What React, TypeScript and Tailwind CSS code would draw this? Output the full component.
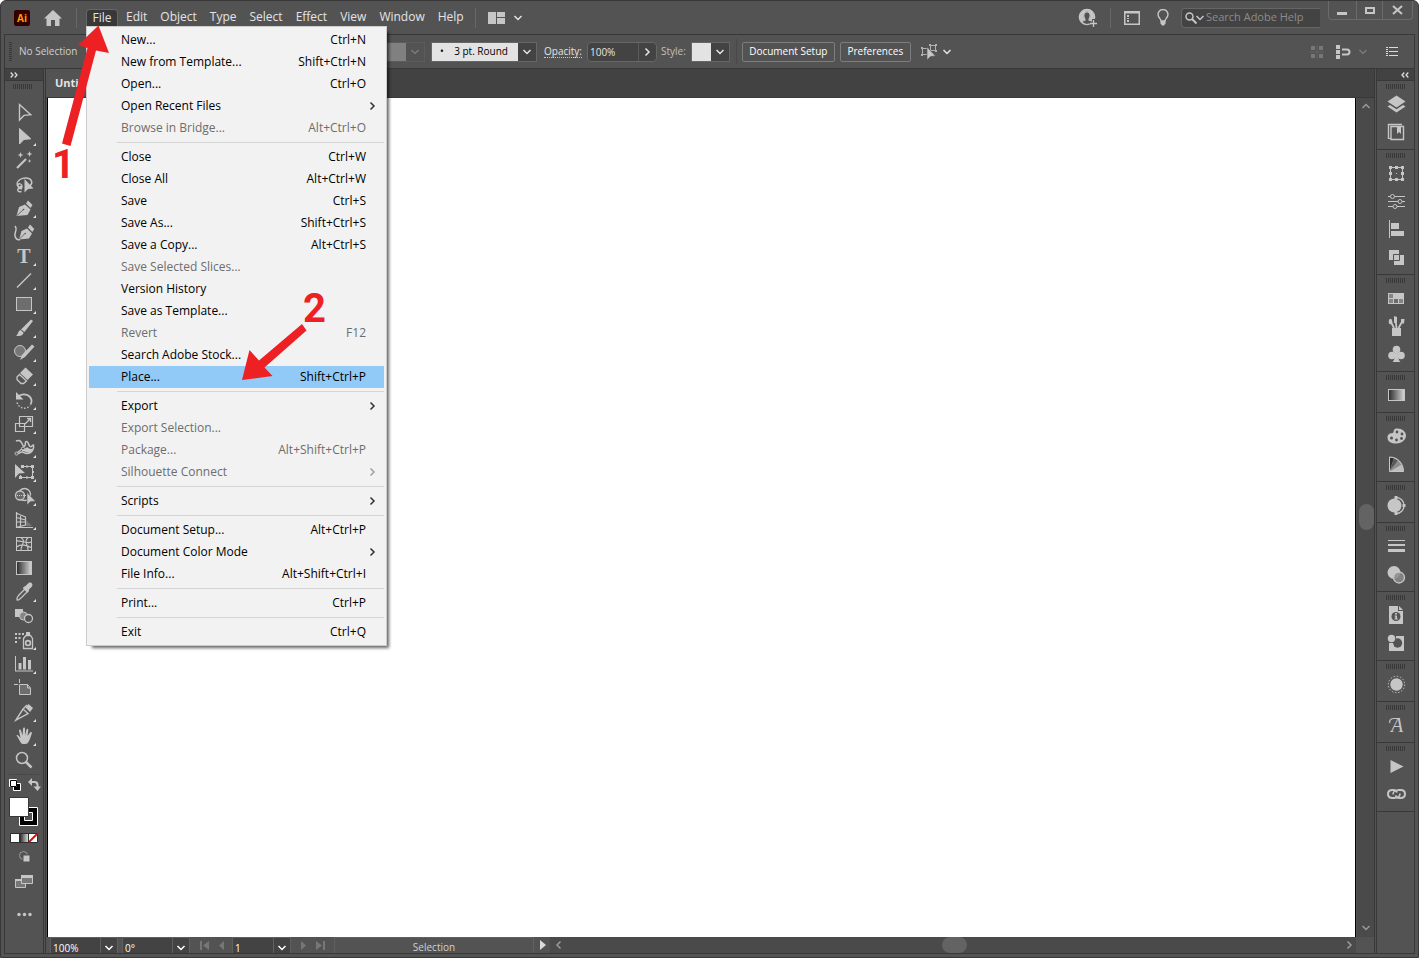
import React from 'react';
import clsx from 'clsx';

type Tool = { name: string; more?: boolean; icon: React.ReactNode };

const LIGHT = '#c6c6c6';

const ARROW = 'M7.5 4.5v15.5l4.5-4.6 6.8-.6z';

const tools: Tool[] = [
  { name: 'Selection', icon: <path d={ARROW} fill="none" stroke={LIGHT} strokeWidth="1.4" /> },
  { name: 'Direct Selection', more: true, icon: <path d={ARROW} stroke={LIGHT} /> },
  {
    name: 'Magic Wand',
    icon: (
      <>
        <path d="M5 20L14 11" stroke={LIGHT} strokeWidth="2.2" />
        <path d="M8.500 4l.8 2.200 2.200.8-2.200.8-.8 2.200-.8-2.200-2.200-.8 2.200-.8zM17.500 3l.8 2.200 2.200.8-2.200.8-.8 2.200-.8-2.200-2.200-.8 2.200-.8zM17.500 11l.5 1.500 1.500.5-1.500.5-.5 1.500-.5-1.500-1.500-.5 1.500-.5z" />
      </>
    ),
  },
  {
    name: 'Lasso',
    icon: (
      <>
        <path d="M10 17c-5-1-7-6-2-9.500 4-2.500 10-2 11.500 1.500.8 2-.5 4-1.500 5M9.500 19.500c-3 1-4.500-1-3.500-2.500s4 .5 4-2.500-3.500-3.500-4-1.500 2.500 2.500 3.500 1" fill="none" stroke={LIGHT} strokeWidth="1.400" />
        <path d="M12.500 7v13.500l3.600-3.600 5.400-.4z" />
      </>
    ),
  },
  {
    name: 'Pen',
    more: true,
    icon: (
      <>
        <path d="M4.500 20l2.500-9 6-2.500 5.500 5-3 5.500z" />
        <path d="M14 7.500l2-3 4.500 4.500-2 3z" />
        <path d="M5 19.500l6-5.500" stroke="#535353" strokeWidth=".8" />
        <circle cx="11.500" cy="13.500" r=".8" fill="#535353" />
      </>
    ),
  },
  {
    name: 'Curvature',
    icon: (
      <>
        <path d="M3 6c3 3-1 7 0 10 .8 3 3 4 5 3.500" fill="none" stroke={LIGHT} strokeWidth="1.500" />
        <path d="M7 19.500l2.500-8.500 5.500-2.500 5 5-3 5z" />
        <path d="M16 7.500l2-3 4.300 4.500-2 3z" />
        <path d="M7.500 19l5-5" stroke="#535353" strokeWidth=".8" />
        <circle cx="13.200" cy="13.500" r=".8" fill="#535353" />
      </>
    ),
  },
  {
    name: 'Type',
    more: true,
    icon: (
      <text x="12" y="19" textAnchor="middle" fontSize="20" fontWeight="700" className="font-['Liberation_Serif',serif]">
        T
      </text>
    ),
  },
  { name: 'Line Segment', more: true, icon: <path d="M5 19.500L19 5.500" stroke={LIGHT} strokeWidth="1.500" /> },
  { name: 'Rectangle', more: true, icon: <rect x="4.500" y="5.500" width="15" height="13" fill="#6e6e6e" stroke={LIGHT} /> },
  {
    name: 'Paintbrush',
    more: true,
    icon: (
      <>
        <path d="M19 3.500l2 1.500-8.500 11-3.500-2.500z" />
        <path d="M8.500 14l3 2.500c0 3-4 4.500-7.500 3 2.500-.8 1.500-4.500 4.500-5.500z" />
      </>
    ),
  },
  {
    name: 'Shaper',
    more: true,
    icon: (
      <>
        <circle cx="8" cy="11" r="5.500" fill="#777" stroke={LIGHT} />
        <path d="M22.500 6.500L13 17l-5 3 2-5 10-10.500z" />
      </>
    ),
  },
  {
    name: 'Eraser',
    more: true,
    icon: (
      <>
        <path d="M13.500 3.500l7.500 7-5.500 5.500-7.500-7z" />
        <path d="M7.500 10.500l7 6.500-3 2.500H9L5 15.500v-2.500z" fill="none" stroke={LIGHT} strokeWidth="1.300" />
      </>
    ),
  },
  {
    name: 'Rotate',
    more: true,
    icon: (
      <>
        <path d="M6 9c4-4.500 12-3 13.500 3 .3 1.500 0 3-1 4.500" fill="none" stroke={LIGHT} strokeWidth="1.800" />
        <path d="M4 4v7.500h7.500z" />
        <path d="M5 14.500c2 6.500 9.500 7.500 13 3" fill="none" stroke={LIGHT} strokeWidth="1.400" strokeDasharray="1.500 1.700" />
      </>
    ),
  },
  {
    name: 'Scale',
    more: true,
    icon: (
      <>
        <path d="M3.500 11.500h9v8h-9zM7.500 14.500v-10h13v10z" fill="none" stroke={LIGHT} strokeWidth="1.200" />
        <path d="M13 12l5-5M15 6.500h3.500V10" fill="none" stroke={LIGHT} strokeWidth="1.300" />
      </>
    ),
  },
  {
    name: 'Width',
    more: true,
    icon: (
      <>
        <path d="M4 5c3-1.500 5 0 6 2.500s2 3.500 3 2-.5-4 1.500-4 2 4 3.500 5 2-1.500 3.500-1.500c1 4-2 8.500-6.500 8.500-3 0-3-1.500-5-1.500s-2.500 1.500-4 1.500" fill="none" stroke={LIGHT} strokeWidth="1.500" />
        <path d="M10 12c1.500 1 4 1 5-1 2 2 4 2.500 6 1.500-1 3-3 4.500-6 4-2-.5-3-1.500-5-1z" />
        <path d="M5 17l6-5" stroke={LIGHT} strokeWidth="1.200" />
        <circle cx="4.500" cy="17.500" r="1.500" fill="#535353" stroke={LIGHT} />
        <circle cx="11" cy="12.500" r="1.500" fill="#535353" stroke={LIGHT} />
      </>
    ),
  },
  {
    name: 'Free Transform',
    more: true,
    icon: (
      <>
        <path d="M3 4v14l4-4.500 6-.5z" />
        <path d="M10 6.500h10.500v11H8.500V15" fill="none" stroke={LIGHT} />
        <path d="M9 5h3v3H9zM19 5h3v3h-3zM19 16h3v3h-3zM7 16h3v3H7zM14 16.500h2v2h-2zM20 11h2v2h-2zM14 5.500h2v2h-2z" />
      </>
    ),
  },
  {
    name: 'Shape Builder',
    more: true,
    icon: (
      <>
        <circle cx="12.500" cy="10.500" r="6" fill="none" stroke={LIGHT} strokeWidth="1.300" />
        <circle cx="8" cy="11.500" r="4.500" fill="#666" stroke={LIGHT} strokeWidth="1.300" />
        <path d="M5 11.500h11" stroke={LIGHT} strokeDasharray="1 1" />
        <path d="M15 8.500v12.500l3.300-3.300 5.200-.4z" stroke="#535353" strokeWidth=".6" />
      </>
    ),
  },
  {
    name: 'Perspective Grid',
    more: true,
    icon: (
      <>
        <path d="M4.500 4v15.500M4 5l9.500 4M4.500 9.500l9 2.500M4.500 14h9M8.500 6.500v11.500M13.500 8.500V17L4 19.500h17" fill="none" stroke={LIGHT} strokeWidth="1.200" />
        <path d="M14 12l6 6h-6z" fill="#777" />
      </>
    ),
  },
  {
    name: 'Mesh',
    icon: (
      <>
        <rect x="4.500" y="5.500" width="15" height="13" fill="none" stroke={LIGHT} />
        <path d="M4.500 9c5-.5 10 3 15 1M4.500 15c6-4.500 10-1 15 .5M9 5.500c6 3.500-1 9 0 13M16 5.500c-5 5 1 8 0 13" fill="none" stroke={LIGHT} strokeWidth="1.200" />
      </>
    ),
  },
  { name: 'Gradient', icon: <rect x="4.500" y="5.500" width="15" height="13" fill="url(#fade)" stroke={LIGHT} /> },
  {
    name: 'Eyedropper',
    more: true,
    icon: (
      <>
        <path d="M5 20c-.8-2 .5-3 2-5l6-6 2.500 2.500-6 6c-2 1.500-3 3-4.500 2.500z" fill="none" stroke={LIGHT} strokeWidth="1.300" />
        <path d="M11.500 7l2-1 3-3c2.500-1.500 5 .8 3.500 3.500l-3 3-.5 2.500-1.500.5L11 8.500z" />
      </>
    ),
  },
  {
    name: 'Blend',
    icon: (
      <>
        <path d="M3 5h8v8H3z" />
        <circle cx="11.500" cy="12" r="4" fill="#868686" stroke={LIGHT} />
        <circle cx="16.500" cy="14.500" r="4" fill="#535353" stroke={LIGHT} strokeWidth="1.300" />
      </>
    ),
  },
  {
    name: 'Symbol Sprayer',
    more: true,
    icon: (
      <>
        <path d="M3 5h2v2H3zM6.500 5h2v2h-2zM10 5h2v2h-2zM3 9h2v2H3zM6.500 9h2v2h-2zM3 13h2v2H3zM14 4h4v3h-4z" />
        <path d="M11.500 10.500l2.500-3h4.500l2 3v10h-9z" fill="#535353" stroke={LIGHT} strokeWidth="1.300" />
        <circle cx="16" cy="15" r="2.400" fill="none" stroke={LIGHT} strokeWidth="1.600" />
      </>
    ),
  },
  {
    name: 'Column Graph',
    more: true,
    icon: <path d="M3 4h1v14.500h17v1H3zM6.500 11h3v6.500h-3zM11 5h3v12.500h-3zM16 8h3v9.500h-3z" />,
  },
  {
    name: 'Artboard',
    icon: (
      <>
        <path d="M7.500 8.500h8l3 3.500v6.500h-11z" fill="#6e6e6e" stroke={LIGHT} />
        <path d="M7.500 3v4M2 8.500h4M15.500 8.500V12h3" fill="none" stroke={LIGHT} />
      </>
    ),
  },
  {
    name: 'Slice',
    more: true,
    icon: (
      <>
        <path d="M4 20L11 9l5 4.500zM11 9l4-4" fill="none" stroke={LIGHT} strokeWidth="1.400" />
        <path d="M13.500 7.500L16.500 4l4.500 4-3 4z" />
      </>
    ),
  },
  {
    name: 'Hand',
    more: true,
    icon: (
      <path d="M4.500 11.500c1-1 2 0 4 2.500L7 6.500c0-1.500 1.600-1.500 2 0l1.500 5L11 4.500c.2-1.500 2-1.500 2 0v7l1.500-6c.4-1.400 2-1 1.800.4L15.500 12l2.500-3.500c1-1.200 2.400-.4 1.800 1-1 2.500-2 7-4 9.500-.8 1-4.500 1.500-6.300.5C8 18 6.500 14 4.500 11.500z" />
    ),
  },
  {
    name: 'Zoom',
    icon: (
      <>
        <circle cx="10" cy="10" r="5.500" fill="none" stroke={LIGHT} strokeWidth="1.500" />
        <path d="M14 14l5.500 5.500" stroke={LIGHT} strokeWidth="2.500" />
      </>
    ),
  },
];

const panels: Tool[][] = [
  [
    { name: 'Layers', icon: <><path d="M14.500 5.500l9 6-9 6-9-6z" /><path d="M5.500 16.500l2.500-1.500 6.500 4.300 6.500-4.300 2.500 1.500-9 6z" /></> },
    {
      name: 'Libraries',
      icon: (
        <>
          <path d="M6.500 21V6.500H20M9 8.500h12.500v13H9z" fill="none" stroke={LIGHT} strokeWidth="1.400" />
          <path d="M6 20.500h3" stroke={LIGHT} />
          <path d="M15 8h4v8l-2-2-2 2z" />
        </>
      ),
    },
  ],
  [
    {
      name: 'Transform',
      icon: (
        <>
          <path d="M8.500 8.500h12v12h-12z" fill="none" stroke={LIGHT} />
          <path d="M7 7h3v3H7zM13 7h3v3h-3zM19 7h3v3h-3zM7 13h3v3H7zM19 13h3v3h-3zM7 19h3v3H7zM13 19h3v3h-3zM19 19h3v3h-3zM14 14h1v1h-1z" />
        </>
      ),
    },
    {
      name: 'Properties',
      icon: (
        <>
          <path d="M6 9.500h17M6 14.500h17M6 19.500h17" stroke={LIGHT} />
          <g fill="#535353" stroke={LIGHT}>
            <circle cx="10.500" cy="9.500" r="2" />
            <circle cx="18" cy="14.500" r="2" />
            <circle cx="13" cy="19.500" r="2" />
          </g>
        </>
      ),
    },
    { name: 'Align', icon: <path d="M7 5h1v18H7zM9 8h8v6H9zM9 16h13v5H9z" /> },
    {
      name: 'Pathfinder',
      icon: (
        <>
          <path d="M7 7h10v10H7z" />
          <path d="M12 12h10v10H12z" />
          <path d="M11.500 17.500v-6h6v6z" fill="#c6c6c6" stroke="#535353" />
        </>
      ),
    },
  ],
  [
    {
      name: 'Swatches',
      icon: (
        <>
          <path d="M6 9h16v11H6z" />
          <path d="M7 10h4v4H7zM7 15h4v4H7zM17 15h4v4h-4z" fill="#858585" />
          <path d="M12 15h4v4h-4z" fill="#6b6b6b" />
        </>
      ),
    },
    {
      name: 'Brushes',
      icon: (
        <>
          <path d="M10 16h9v8h-9z" />
          <path d="M12 16L9 10M14.500 16l-1-9M16.500 16l4-7" stroke={LIGHT} strokeWidth="1.800" />
          <ellipse cx="8.500" cy="9.500" rx="1.800" ry="2.800" />
          <path d="M12 4l3 1v6h-3zM19 7h3.500l-.5 4.500h-3z" />
        </>
      ),
    },
    {
      name: 'Symbols',
      icon: (
        <>
          <circle cx="14.500" cy="9.500" r="3.800" />
          <circle cx="10" cy="15.500" r="3.800" />
          <circle cx="19" cy="15.500" r="3.800" />
          <path d="M13 11h3c-.5 5 .5 9.500 2.500 11h-8c2-1.500 3-6 2.500-11z" />
        </>
      ),
    },
  ],
  [{ name: 'Gradient', icon: <rect x="6.500" y="8.500" width="16" height="11" fill="url(#fade)" stroke={LIGHT} /> }],
  [
    {
      name: 'Color',
      icon: (
        <>
          <path d="M5.500 15.500c0-4 3-4 5-4.500s0-4 4-4.500c5-.5 9.500 3 9.500 7 0 4-4 8-9.500 8s-9-2-9-6z" />
          <g fill="#535353">
            <circle cx="15" cy="10" r="1.400" />
            <circle cx="20" cy="12" r="1.400" />
            <circle cx="19.500" cy="16.500" r="1.400" />
            <circle cx="14.500" cy="18" r="1.400" />
            <circle cx="9.500" cy="16" r="1.500" />
          </g>
        </>
      ),
    },
    {
      name: 'Color Guide',
      icon: (
        <>
          <path d="M7.500 7c8 0 14 6 14 14.500h-14z" fill="#bdbdbd" />
          <path d="M7.500 21.500V7.500l4.500.8z" fill="#2e2e2e" />
          <path d="M7.500 21.500L12 8.300l4 2.500z" fill="#585858" />
          <path d="M7.500 21.500l8.500-10.700 3.500 4z" fill="#8c8c8c" />
          <path d="M7.500 7c8 0 14 6 14 14.500h-14z" fill="none" stroke={LIGHT} />
        </>
      ),
    },
  ],
  [
    {
      name: 'Recolor',
      icon: (
        <>
          <circle cx="12.500" cy="14.500" r="7" />
          <path d="M14 6.500c4.500 0 8 3.500 8 8s-3.500 8-8 8" fill="none" stroke="#535353" strokeWidth="3" />
          <path d="M14 6.500c4.500 0 8 3.500 8 8s-3.500 8-8 8" fill="none" stroke={LIGHT} strokeWidth="1.300" />
          <path d="M12.500 5h3v3h-3zM20.500 13h3v3h-3zM12.500 21h3v3h-3z" />
        </>
      ),
    },
  ],
  [
    { name: 'Stroke', icon: <path d="M6 8h17v1H6zM6 12h17v2H6zM6 17h17v3H6z" /> },
    {
      name: 'Transparency',
      icon: (
        <>
          <circle cx="12" cy="12.500" r="6.500" />
          <circle cx="17" cy="17.500" r="5.500" fill="#8a8a8a" fillOpacity=".85" stroke={LIGHT} strokeWidth="1.300" />
        </>
      ),
    },
  ],
  [
    {
      name: 'Document Info',
      icon: (
        <>
          <path d="M7 5h9v5h5v13H7z" />
          <path d="M17 5l4 4h-4z" />
          <circle cx="14" cy="15.500" r="4.500" fill="#535353" />
          <path d="M13 12h2v1.500h-2zM12.500 14.500H15V17.500h.8v1h-3.300v-1h.8v-2h-.8z" />
        </>
      ),
    },
    {
      name: 'Graphic Styles',
      icon: (
        <>
          <path d="M7 7h15v15H7z" />
          <path d="M6 6h8v8H6z" fill="#535353" />
          <circle cx="15.500" cy="14" r="4.700" fill="#535353" />
          <circle cx="9.500" cy="9.500" r="3.700" />
          <path d="M7 14h4l1 3H7z" />
        </>
      ),
    },
  ],
  [
    {
      name: 'Appearance',
      icon: (
        <>
          <circle cx="14.500" cy="14.500" r="6.200" />
          <circle cx="14.500" cy="14.500" r="8.200" fill="none" stroke={LIGHT} strokeDasharray="1.500 1.720" />
        </>
      ),
    },
  ],
  [
    {
      name: 'Glyphs',
      icon: (
        <>
          <text x="15" y="21" textAnchor="middle" fontSize="20" fontStyle="italic" className="font-['Liberation_Serif',serif]">
            A
          </text>
          <path d="M8 12c-1.500-2.500 1-4.500 4-4.500h6" fill="none" stroke={LIGHT} strokeWidth="1.200" />
        </>
      ),
    },
  ],
  [
    { name: 'Actions', icon: <path d="M8.500 8l13 6.500-13 6.500z" /> },
    {
      name: 'Links',
      icon: (
        <>
          <path d="M15 12.500c-.5-1.500-1.500-2.500-3.500-2.500h-1C8 10 6 11.500 6 14s2 4 4.500 4H13" fill="none" stroke={LIGHT} strokeWidth="2" />
          <path d="M16 10h2.500c2.500 0 4.500 1.500 4.500 4s-2 4-4.500 4h-1c-2 0-3.500-1-4-2.500" fill="none" stroke={LIGHT} strokeWidth="2" />
          <path d="M11 14.500c0-2.500 2-4.500 5-4.500M18 13.500c0 2.500-2 4.500-5 4.500" fill="none" stroke={LIGHT} strokeWidth="1.600" />
        </>
      ),
    },
  ],
];

type Entry = { label: string; keys?: string; sub?: boolean; off?: boolean; hot?: boolean };

const fileMenu: Entry[][] = [
  [
    { label: 'New...', keys: 'Ctrl+N' },
    { label: 'New from Template...', keys: 'Shift+Ctrl+N' },
    { label: 'Open...', keys: 'Ctrl+O' },
    { label: 'Open Recent Files', sub: true },
    { label: 'Browse in Bridge...', keys: 'Alt+Ctrl+O', off: true },
  ],
  [
    { label: 'Close', keys: 'Ctrl+W' },
    { label: 'Close All', keys: 'Alt+Ctrl+W' },
    { label: 'Save', keys: 'Ctrl+S' },
    { label: 'Save As...', keys: 'Shift+Ctrl+S' },
    { label: 'Save a Copy...', keys: 'Alt+Ctrl+S' },
    { label: 'Save Selected Slices...', off: true },
    { label: 'Version History' },
    { label: 'Save as Template...' },
    { label: 'Revert', keys: 'F12', off: true },
    { label: 'Search Adobe Stock...' },
    { label: 'Place...', keys: 'Shift+Ctrl+P', hot: true },
  ],
  [
    { label: 'Export', sub: true },
    { label: 'Export Selection...', off: true },
    { label: 'Package...', keys: 'Alt+Shift+Ctrl+P', off: true },
    { label: 'Silhouette Connect', sub: true, off: true },
  ],
  [{ label: 'Scripts', sub: true }],
  [
    { label: 'Document Setup...', keys: 'Alt+Ctrl+P' },
    { label: 'Document Color Mode', sub: true },
    { label: 'File Info...', keys: 'Alt+Shift+Ctrl+I' },
  ],
  [{ label: 'Print...', keys: 'Ctrl+P' }],
  [{ label: 'Exit', keys: 'Ctrl+Q' }],
];

const menus = ['Edit', 'Object', 'Type', 'Select', 'Effect', 'View', 'Window', 'Help'];

const Chevron = ({ dir = 'down', className }: { dir?: 'down' | 'up' | 'left' | 'right'; className?: string }) => {
  const d = {
    down: 'M1.500 3l3.500 3.500L8.500 3',
    up: 'M1.500 7L5 3.500 8.500 7',
    left: 'M6.500 1.500L3 5l3.500 3.500',
    right: 'M3.500 1.500L7 5 3.500 8.500',
  }[dir];
  return (
    <svg width="10" height="10" viewBox="0 0 10 10" className={clsx('shrink-0', className)}>
      <path d={d} fill="none" stroke="currentColor" strokeWidth="1.500" />
    </svg>
  );
};

const Grip = () => (
  <svg width="20" height="5" className="block">
    <path d="M0 2.500h20" stroke="#383838" strokeWidth="5" strokeDasharray="1 1" />
  </svg>
);

const Divider = ({ className }: { className?: string }) => <div className={clsx('w-px bg-[#676767]', className)} />;

const FileMenu = () => (
  <div role="menu" className="absolute left-0 top-full z-10 w-[301px] border border-[#ccc] bg-[#f2f2f2] p-[2px] text-black shadow-[4px_4px_3px_-2px_rgba(0,0,0,0.6)]">
    {fileMenu.map((group, i) => (
      <div key={i}>
        {i > 0 && <hr className="my-[3px] ml-7 h-px border-0 bg-[#d5d5d5]" />}
        {group.map((e) => (
          <button
            key={e.label}
            role="menuitem"
            disabled={e.off}
            className={clsx('flex h-[22px] w-full items-center pl-8', e.off && 'text-[#6d6d6d]', e.hot && 'bg-[#91c9f7]')}
          >
            <span className="flex-1 text-left">{e.label}</span>
            <span className={clsx(!e.sub && 'pr-[18px]')}>{e.keys}</span>
            {e.sub && <Chevron dir="right" className={clsx('mr-[7px]', e.off ? 'text-[#a0a0a0]' : 'text-[#333]')} />}
          </button>
        ))}
      </div>
    ))}
  </div>
);

const TitleBar = () => (
  <header className="flex h-[33px] items-center text-xs text-[#e4e4e4]">
    <svg width="16" height="16" className="ml-[13px]" role="img" aria-label="Ai">
      <rect width="16" height="16" rx="2" fill="#330000" />
      <text x="8" y="12" textAnchor="middle" fontSize="10" fontWeight="700" fill="#ff9a00" className="font-['Open_Sans',sans-serif]">
        Ai
      </text>
    </svg>
    <button aria-label="Home" className="ml-3.5">
      <svg width="18" height="16" fill={LIGHT}>
        <path d="M9 0l9 8.500h-2.500V16h-4.500v-6H7v6H2.500V8.500H0z" />
      </svg>
    </button>
    <Divider className="ml-3.5 h-5" />
    <nav className="ml-[9px] flex h-[31px] items-center self-start">
      <div className="relative mr-[2px] mt-2 flex h-[17px] self-start">
        <button className="w-8 rounded-t-sm border border-b-0 border-[#666] bg-[#383838] leading-4">File</button>
        <FileMenu />
      </div>
      <div className="flex gap-px">
        {menus.map((m) => (
          <button key={m} className="px-1.5">
            {m}
          </button>
        ))}
      </div>
    </nav>
    <Divider className="ml-[5px] h-5" />
    <button aria-label="Arrange documents" className="ml-3 flex items-center gap-2">
      <svg width="17" height="12" fill={LIGHT}>
        <path d="M0 0h8v12H0zM9 0h8v5H9zM9 6h8v6H9z" />
      </svg>
      <Chevron />
    </button>
    <div className="flex-1" />
    <button aria-label="Account">
      <svg width="20" height="20" viewBox="0 0 20 20">
        <circle cx="9" cy="9" r="7.500" fill="none" stroke={LIGHT} strokeWidth="1.600" />
        <path d="M9 4c2 0 3.200 1.500 3.200 3.500S11 11 11 12l3.500 1.500C13 15.500 11 16.500 9 16.500S5 15.500 3.500 13.500L7 12c0-1-1.200-2.500-1.200-4.500S7 4 9 4z" fill="#535353" stroke={LIGHT} strokeWidth="1.200" />
        <path d="M3 13.500c-3-6 1-12 6-12s9 6 6 12l-3.500-2c2-3 .5-8-2.500-8s-4.500 5-2.500 8z" fill={LIGHT} />
        <path d="M15.500 11v8M11.500 15h8" stroke="#535353" strokeWidth="3" />
        <path d="M15.500 12v7M12 15.500h7" stroke={LIGHT} strokeWidth="1.300" />
      </svg>
    </button>
    <Divider className="ml-3 h-5" />
    <button aria-label="Workspace" className="ml-[13px]">
      <svg width="16" height="14" fill={LIGHT}>
        <path d="M0 0h16v14H0zM1.500 2.500v10h13v-10z" fillRule="evenodd" />
        <path d="M3 4h2v2H3zM3 7h2v1H3zM3 9h2v2H3z" />
      </svg>
    </button>
    <button aria-label="Learn" className="ml-[17px]">
      <svg width="12" height="17" viewBox="0 0 12 17">
        <path d="M4 12c0-2-3-3.500-3-6.500a5 5 0 0110 0C11 8.500 8 10 8 12z" fill="none" stroke={LIGHT} strokeWidth="1.400" />
        <path d="M3.500 12h5v2.500l-1.500 2H5l-1.500-2z" fill={LIGHT} />
      </svg>
    </button>
    <label className="ml-3 flex h-5 w-[139px] items-center rounded-l-sm border border-r-0 border-[#666] bg-[#434343] pl-[3px]">
      <svg width="12" height="12" className="shrink-0">
        <circle cx="4.500" cy="4.500" r="3.500" fill="none" stroke={LIGHT} strokeWidth="1.500" />
        <path d="M7 7l4.500 4.500" stroke={LIGHT} strokeWidth="2" />
      </svg>
      <Chevron className="-ml-0.5 text-[#c6c6c6]" />
      <input aria-label="Search Adobe Help" placeholder="Search Adobe Help" className="ml-px w-full min-w-0 bg-transparent text-[11px] outline-none placeholder:text-[#8c8c8c]" />
    </label>
    <div className="ml-2 mr-[5px] flex h-[19px] self-start rounded-b-sm border border-t-0 border-[#6a6a6a] text-[#c6c6c6]">
      <button aria-label="Minimize" className="w-[27px]">
        <svg width="26" height="18" className="block"><path d="M8 11h10v3H8z" fill="currentColor" /></svg>
      </button>
      <button aria-label="Maximize" className="w-[27px] border-x border-[#6a6a6a]">
        <svg width="25" height="18" className="block"><path d="M9 7h8v5H9z" fill="none" stroke="currentColor" strokeWidth="2" /></svg>
      </button>
      <button aria-label="Close" className="w-[29px]">
        <svg width="28" height="18" className="block"><path d="M10 5l9 8M19 5l-9 8" stroke="currentColor" strokeWidth="2" /></svg>
      </button>
    </div>
  </header>
);

const ControlBar = () => (
  <div className="flex h-[34px] items-center border-b border-[#383838] text-[10px] font-medium text-[#e4e4e4]">
    <svg width="3" height="19" className="ml-1">
      <path d="M1.500 0v19" stroke="#383838" strokeWidth="3" strokeDasharray="1 1" />
    </svg>
    <span className="ml-[7px] w-[336px] shrink-0 text-[#d0d0d0]">No Selection</span>
    <div className="flex h-5 w-[70px] items-center border border-[#5c5c5c] text-[#7a7a7a]">
      <span className="h-full flex-1 bg-[#808080]" />
      <Chevron className="mx-1" />
    </div>
    <div className="ml-1.5 flex h-5 w-[106px] items-center border border-[#666] bg-[#434343]">
      <select aria-label="Brush definition" className="h-full min-w-0 flex-1 appearance-none bg-[#e3e3e3] pl-2 text-black">
        <option>•&nbsp;&nbsp;&nbsp;&nbsp;3 pt. Round</option>
      </select>
      <Chevron className="mx-1" />
    </div>
    <label htmlFor="opacity" className="ml-[7px] border-b border-dotted border-[#c6c6c6] leading-3">
      Opacity:
    </label>
    <div className="ml-[5px] flex h-5 w-[70px] items-center rounded-sm border border-[#666] bg-[#434343]">
      <input id="opacity" defaultValue="100%" className="h-full w-[51px] border-r border-[#5c5c5c] bg-transparent pl-[2px] outline-none" />
      <button aria-label="Opacity slider" className="flex flex-1 justify-center">
        <Chevron dir="right" />
      </button>
    </div>
    <span className="ml-1 text-[#c0c0c0]">Style:</span>
    <button aria-label="Graphic style" className="ml-[5px] flex h-5 w-[39px] items-center border border-[#666] bg-[#434343]">
      <span className="h-full w-[19px] bg-[#e3e3e3]" />
      <Chevron className="ml-1" />
    </button>
    <div className="ml-1.5 h-[25px] w-px bg-[#484848]" />
    <button className="ml-[5px] h-5 w-[93px] rounded-xs border border-[#7d7d7d] text-white">Document Setup</button>
    <button className="ml-[5px] h-5 w-[71px] rounded-xs border border-[#7d7d7d] text-white">Preferences</button>
    <button aria-label="Select similar" className="ml-2.5 flex items-center gap-1">
      <svg width="17" height="17" viewBox="0 0 17 17">
        <path d="M1.500 5.500h6v6h-6zM9.500 2.500h5v5h-5z" fill="none" stroke="#b0b0b0" />
        <path d="M0 4h2v2H0zM0 11h2v2H0zM8 1h2v2H8zM14 1h2v2h-2zM14 7h2v2h-2z" fill="#b0b0b0" />
        <path d="M6 4v13l3.500-3.500 5-.5z" fill={LIGHT} stroke="#535353" strokeWidth=".6" />
      </svg>
      <Chevron />
    </button>
    <div className="flex-1" />
    <svg width="14" height="14" fill="#777">
      <path d="M1 1h4v4H1zM9 1h4v4H9zM1 9h4v4H1zM9 9h4v4H9z" />
      <path d="M7 0v14M0 7h14" stroke="#646464" />
    </svg>
    <button aria-label="Snap" className="ml-3 flex items-center gap-1.5">
      <svg width="16" height="14" fill={LIGHT}>
        <path d="M0 0h4v4H0zM0 5h4v4H0zM0 10h4v4H0z" />
        <path d="M6 4.500h5a2.300 2.300 0 010 5H6" fill="none" stroke={LIGHT} strokeWidth="2" />
      </svg>
      <Chevron className="text-[#7a7a7a]" />
    </button>
    <button aria-label="Options" className="ml-[18px] mr-4">
      <svg width="12" height="9" fill="#dcdcdc">
        <path d="M0 0h2v1H0zM3 0h9v1H3zM0 4h2v1H0zM3 4h9v1H3zM0 8h2v1H0zM3 8h9v1H3zM0 2h2v1H0zM0 6h2v1H0z" />
      </svg>
    </button>
  </div>
);

const Collapse = ({ right }: { right?: boolean }) => (
  <div className={clsx('flex h-3 items-center border-b border-[#383838] bg-[#424242]', right && 'justify-end')}>
    <svg width="8" height="6" className={clsx('mx-[5px]', right && '-scale-x-100')}>
      <path d="M.7.500L3 3 .7 5.500M4.700.500L7 3 4.700 5.500" fill="none" stroke="#dcdcdc" strokeWidth="1.300" />
    </svg>
  </div>
);

const Toolbar = () => (
  <aside className="flex w-[39px] shrink-0 flex-col border-r border-[#383838]">
    <Collapse />
    <div className="ml-2 mt-[3px] mb-[11px]">
      <Grip />
    </div>
    <div className="flex flex-col pl-[7px]">
      {tools.map((t) => (
        <button key={t.name} aria-label={t.name} className="h-6">
          <svg width="26" height="24" viewBox="0 0 26 24" fill={LIGHT} className="block">
            {t.icon}
            {t.more && <path d="M24 19v3h-3z" fill="#e4e4e4" />}
          </svg>
        </button>
      ))}
    </div>
    <hr className="mx-1 mt-0.5 border-[#484848]" />
    <div className="mt-[3px] flex justify-between pl-1 pr-[2px]">
      <button aria-label="Default fill and stroke">
        <svg width="12" height="12" className="block">
          <path d="M4.500 4.500h7v7h-7z" fill="#000" stroke="#fff" />
          <path d="M.5.500h7v7h-7z" fill="#fff" stroke="#fff" />
          <path d="M1.500 1.500h6v6h-6z" fill="#fff" stroke="#000" />
        </svg>
      </button>
      <button aria-label="Swap fill and stroke">
        <svg width="13" height="13" className="block">
          <path d="M3 4h3.500a3 3 0 013 3v2" fill="none" stroke={LIGHT} strokeWidth="2" />
          <path d="M0 4l4-4v8zM5.500 8.500h7.500L9.500 13z" fill={LIGHT} />
        </svg>
      </button>
    </div>
    <svg width="29" height="30" className="ml-1 mt-1.5">
      <path d="M10.500 10.500h18v18h-18z" fill="#000" stroke="#fff" />
      <path d="M15.500 15.500h8v8h-8z" fill="#535353" stroke="#fff" />
      <path d="M.5.500h19v19H.5z" fill="#fff" stroke="#383838" />
    </svg>
    <svg width="29" height="10" className="ml-[5px] mt-1.5">
      <path d="M.5.500h27v9H.5z" fill="#fff" stroke="#2e2e2e" />
      <path d="M10 1h8v8h-8z" fill="url(#fade)" />
      <path d="M19 1h8v8h-8z" fill="#fff" />
      <path d="M19 9l8-8" stroke="#e01010" strokeWidth="2" />
      <path d="M9.500 0v10M18.500 0v10" stroke="#2e2e2e" />
    </svg>
    <svg width="12" height="12" className="ml-3.5 mt-2">
      <circle cx="4.500" cy="4.500" r="4" fill="none" stroke="#9a9a9a" />
      <path d="M4 4h7v7H4z" fill={LIGHT} stroke="#535353" />
    </svg>
    <svg width="18" height="13" className="ml-2.5 mt-3">
      <path d="M.5 4.500h10v8H.5z" fill="#777" stroke={LIGHT} />
      <path d="M6.500.500h11v8h-11z" fill="#777" stroke={LIGHT} />
      <path d="M0 4h7v2H0zM6 0h12v3H6z" fill={LIGHT} />
    </svg>
    <svg width="15" height="5" fill={LIGHT} className="ml-3 mt-6">
      <circle cx="2" cy="2.500" r="1.700" />
      <circle cx="7.500" cy="2.500" r="1.700" />
      <circle cx="13" cy="2.500" r="1.700" />
    </svg>
  </aside>
);

const PanelDock = () => (
  <aside className="ml-px flex w-[38px] shrink-0 flex-col border-l border-[#383838]">
    <Collapse right />
    {panels.map((group, i) => (
      <div key={i} className="border-b border-[#383838] pb-[3px] pt-[3px]">
        <div className="ml-[9px]">
          <Grip />
        </div>
        <div className="flex flex-col pl-[5px] pt-px">
          {group.map((p) => (
            <button key={p.name} aria-label={p.name} className="h-7">
              <svg width="28" height="28" viewBox="0 0 28 28" fill={LIGHT} className="block">
                {p.icon}
              </svg>
            </button>
          ))}
        </div>
      </div>
    ))}
  </aside>
);

const Field = ({ label, value, className = 'w-[68px]' }: { label: string; value: string; className?: string }) => (
  <div className={clsx('flex h-4 items-center border-x border-t border-[#606060] bg-[#434343]', className)}>
    <input aria-label={label} defaultValue={value} className="h-full min-w-0 flex-1 border-r border-[#606060] bg-transparent pl-[2px] pt-1 text-white outline-none" />
    <Chevron className="mx-[3px] mt-1 text-white" />
  </div>
);

const StatusBar = () => (
  <footer className="flex h-4 items-center text-[10px] font-medium text-[#d0d0d0]">
    <div className="ml-1 flex shrink-0 gap-1">
      <Field label="Zoom" value="100%" />
      <Field label="Rotate view" value="0°" />
    </div>
    <svg width="25" height="9" fill="#777" className="ml-2.5">
      <path d="M0 0h2v9H0zM9 0v9L3 4.500zM24 0v9l-5-4.500z" />
    </svg>
    <div className="ml-[7px]">
      <Field label="Artboard" value="1" className="w-[59px]" />
    </div>
    <svg width="25" height="9" fill="#777" className="ml-2.5">
      <path d="M0 0l5 4.500L0 9zM15 0l6 4.500L15 9zM22 0h2v9h-2z" />
    </svg>
    <div className="ml-2 flex h-4 w-[200px] items-center justify-center border-x border-t border-[#606060] pt-1">Selection</div>
    <svg width="6" height="10" fill="#dcdcdc" className="ml-1.5">
      <path d="M0 0l6 5-6 5z" />
    </svg>
    <div className="ml-1 flex h-full flex-1 items-center bg-[#4a4a4a] text-[#9a9a9a]">
      <Chevron dir="left" className="ml-1" />
      <div className="flex-1" />
      <span className="h-4 w-[25px] rounded-full bg-[#636363]" />
      <div className="flex-1" />
      <Chevron dir="right" className="mr-0.5" />
    </div>
    <div className="w-[18px]" />
  </footer>
);

const Document = () => (
  <main className="ml-px flex min-w-0 flex-1 flex-col border-x border-[#383838]">
    <div className="flex h-[29px] border-b border-[#383838] bg-[#424242]">
      <div className="flex w-[300px] items-center bg-[#535353] pl-[9px] text-[11px] font-bold text-[#e4e4e4]">Untitled-1</div>
    </div>
    <div className="flex flex-1">
      <div className="ml-px flex-1 border-x border-black bg-white" />
      <div className="ml-px flex w-[17px] flex-col items-center bg-[#4a4a4a] pl-px text-[#9a9a9a]">
        <Chevron dir="up" className="mt-[3px]" />
        <div className="flex-1" />
        <span className="h-[26px] w-[15px] rounded-full bg-[#636363]" />
        <div className="flex-1" />
        <Chevron className="mb-1" />
      </div>
    </div>
    <StatusBar />
  </main>
);

// Red callout arrows drawn over the menu
const Callouts = () => (
  <div className="pointer-events-none absolute -left-px -top-px z-20 font-['Roboto',sans-serif] text-[40px] font-bold leading-none text-[#ed2024]">
    <svg width="400" height="400" fill="#ed2024">
      <path d="M98.500 25.500l10.500 27.500-13-2.500L70.500 146l-8.500-2.500L87.500 48 78 45z" />
      <path d="M242 380l7.500-30 9.500 10.500 43-36.500 4.500 6.500-42 37 8 8.500z" />
    </svg>
    <span className="absolute left-[52px] top-[145px]">1</span>
    <span className="absolute left-[303px] top-[289px]">2</span>
  </div>
);

export default function App() {
  return (
    <div className="relative flex min-h-screen flex-col rounded-t-md border border-[#383838] bg-[#535353] font-['Open_Sans','Noto_Sans',sans-serif]">
      <svg width="0" height="0" className="absolute">
        <linearGradient id="fade">
          <stop offset="0" stopColor="#2a2a2a" />
          <stop offset="1" stopColor="#d8d8d8" />
        </linearGradient>
      </svg>
      <TitleBar />
      <div className="mx-[3px] mb-[3px] flex flex-1 flex-col border border-[#383838]">
        <ControlBar />
        <div className="flex flex-1">
          <Toolbar />
          <Document />
          <PanelDock />
        </div>
      </div>
      <Callouts />
    </div>
  );
}
